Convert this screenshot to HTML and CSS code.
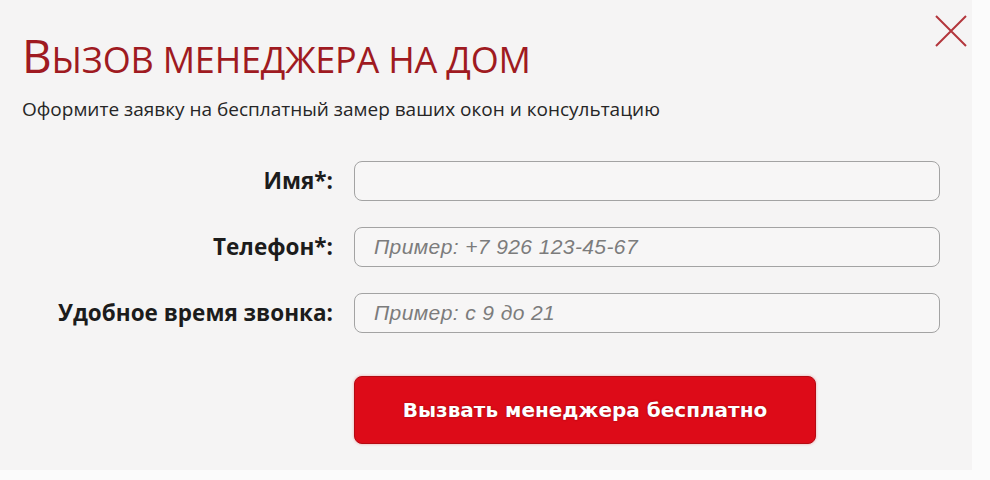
FILE: index.html
```html
<!DOCTYPE html>
<html lang="ru">
<head>
<meta charset="utf-8">
<title>Вызов менеджера на дом</title>
<link rel="stylesheet" href="styles.css">
</head>
<body>
<div class="card">
  <button class="close" aria-label="Закрыть">
    <svg width="34" height="34" viewBox="0 0 34 34"><path d="M2 2 L32 32 M32 2 L2 32" stroke="#b3363c" stroke-width="2" fill="none"/></svg>
  </button>
  <h1 class="title">Вызов менеджера на дом</h1>
  <p class="subtitle">Оформите заявку на бесплатный замер ваших окон и консультацию</p>
  <form class="form">
    <label class="label" for="name">Имя*:</label>
    <input class="field" id="name" type="text">
    <label class="label" for="phone">Телефон*:</label>
    <input class="field" id="phone" type="text" placeholder="Пример: +7 926 123-45-67">
    <label class="label" for="time">Удобное время звонка:</label>
    <input class="field" id="time" type="text" placeholder="Пример: с 9 до 21">
    <button class="submit" type="button">Вызвать менеджера бесплатно</button>
  </form>
</div>
</body>
</html>
```
FILE: styles.css
```css
html, body {
  margin: 0;
  padding: 0;
  background: #fbfbfb;
}
.card {
  position: relative;
  width: 972px;
  height: 470px;
  box-sizing: border-box;
  background: #f5f4f4;
  padding: 28px 0 0 22px;
  font-family: "Open Sans", "Noto Sans", sans-serif;
}
.close {
  position: absolute;
  top: 14px;
  left: 934px;
  width: 34px;
  height: 34px;
  padding: 0;
  border: 0;
  background: none;
}
.close svg { display: block; }
.title {
  margin: 0;
  font-weight: 400;
  font-size: 36px;
  line-height: 54px;
  height: 54px;
  text-transform: uppercase;
  color: #9f1a21;
  letter-spacing: -0.2px;
}
.title::first-letter {
  font-size: 46px;
}
.subtitle {
  margin: 14px 0 0;
  font-size: 19px;
  line-height: 26px;
  color: #262626;
}
.form {
  display: grid;
  grid-template-columns: 311px 586px;
  column-gap: 21px;
  row-gap: 26px;
  margin-top: 39px;
}
.label {
  justify-self: end;
  align-self: center;
  font-weight: 700;
  font-size: 22.5px;
  line-height: 30px;
  color: #1c1c1c;
}
.field {
  height: 40px;
  box-sizing: border-box;
  border: 1px solid #a3a3a3;
  border-radius: 8px;
  background: #f7f6f6;
  padding: 0 19px;
  font-family: "Liberation Sans", Arial, sans-serif;
  font-size: 21px;
  letter-spacing: 0.4px;
  font-style: italic;
  color: #333;
}
.field::placeholder {
  color: #7c7c7c;
  font-style: italic;
}
.submit {
  grid-column: 2;
  justify-self: start;
  width: 462px;
  height: 68px;
  margin-top: 17px;
  border: 1px solid #b50a12;
  border-radius: 8px;
  background: #dd0b18;
  color: #fff;
  font-family: "DejaVu Sans", sans-serif;
  font-weight: 700;
  font-size: 20px;
  text-shadow: 0 0 2px rgba(90,0,0,0.6);
  box-shadow: 0 0 3px rgba(221,11,24,0.35);
}
```
